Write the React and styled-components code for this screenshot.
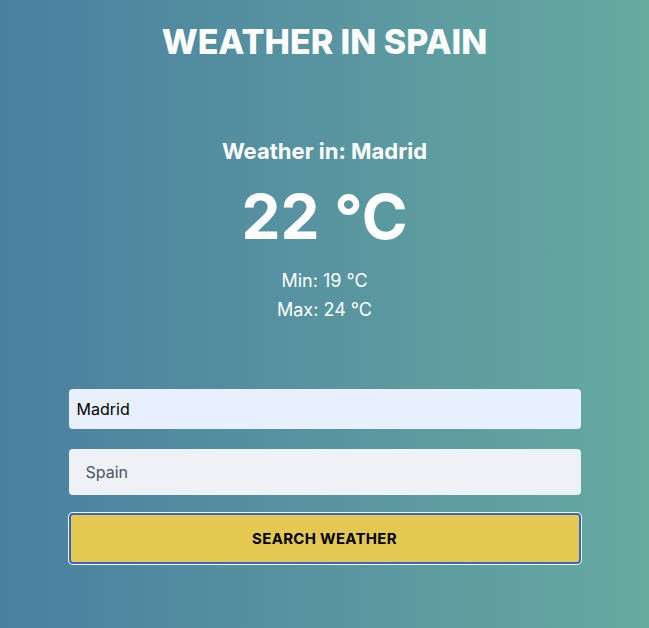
import React, { useState } from "react";
import styled, { createGlobalStyle } from "styled-components";

const GlobalStyle = createGlobalStyle`
  html, body {
    margin: 0;
    padding: 0;
    height: 100%;
  }
  body {
    font-family: Inter, "Noto Sans", "Liberation Sans", sans-serif;
  }
  #root {
    min-height: 100%;
  }
`;

export default function App() {
  const [city, setCity] = useState("Madrid");
  const [country, setCountry] = useState("");

  const weather = { city: "Madrid", temp: 22, min: 19, max: 24 };

  return (
    <Page>
      <GlobalStyle />
      <Title>WEATHER IN SPAIN</Title>

      <Result>
        <City>Weather in: {weather.city}</City>
        <Temp>{weather.temp} °C</Temp>
        <Range>
          <span>Min: {weather.min} °C</span>
          <span>Max: {weather.max} °C</span>
        </Range>
      </Result>

      <Form onSubmit={(e) => e.preventDefault()}>
        <CityInput value={city} onChange={(e) => setCity(e.target.value)} />
        <CountryInput
          placeholder="Spain"
          value={country}
          onChange={(e) => setCountry(e.target.value)}
        />
        <SearchButton type="submit">SEARCH WEATHER</SearchButton>
      </Form>
    </Page>
  );
}

const Page = styled.div`
  min-height: 628px;
  box-sizing: border-box;
  background: linear-gradient(90deg, #4a7fa0 0%, #66aaa0 100%);
  color: #ffffff;
  display: flex;
  flex-direction: column;
  align-items: center;
  padding-top: 22px;
`;

const Title = styled.h1`
  margin: 0;
  font-size: 34px;
  font-weight: 800;
  line-height: 40px;
`;

const Result = styled.div`
  display: flex;
  flex-direction: column;
  align-items: center;
  margin-top: 74px;
`;

const City = styled.h2`
  margin: 0;
  font-size: 22px;
  font-weight: 700;
  line-height: 30px;
`;

const Temp = styled.div`
  margin-top: 16px;
  font-size: 62px;
  font-weight: 700;
  line-height: 70px;
`;

const Range = styled.div`
  margin-top: 14px;
  display: flex;
  flex-direction: column;
  align-items: center;
  font-size: 18px;
  line-height: 29px;
`;

const Form = styled.form`
  width: 512px;
  margin-top: 65px;
  display: flex;
  flex-direction: column;
  gap: 20px;
`;

const BaseInput = styled.input`
  box-sizing: border-box;
  width: 100%;
  border: none;
  border-radius: 4px;
  font-family: inherit;
  font-size: 16px;
  color: #000000;
  outline: none;

  &::placeholder {
    color: #4b5563;
  }
`;

const CityInput = styled(BaseInput)`
  height: 40px;
  padding: 0 8px;
  background: #e8f0fe;
`;

const CountryInput = styled(BaseInput)`
  height: 46px;
  padding: 0 17px;
  background: #eef2f7;
`;

const SearchButton = styled.button`
  box-sizing: border-box;
  height: 51px;
  margin-top: -2px;
  width: 100%;
  border: 2px solid #3b63c9;
  box-shadow: 0 0 0 1px #ffffff;
  border-radius: 4px;
  background: #e3c852;
  color: #000000;
  font-family: inherit;
  font-size: 15px;
  font-weight: 700;
  letter-spacing: 0.3px;
  cursor: pointer;
`;
